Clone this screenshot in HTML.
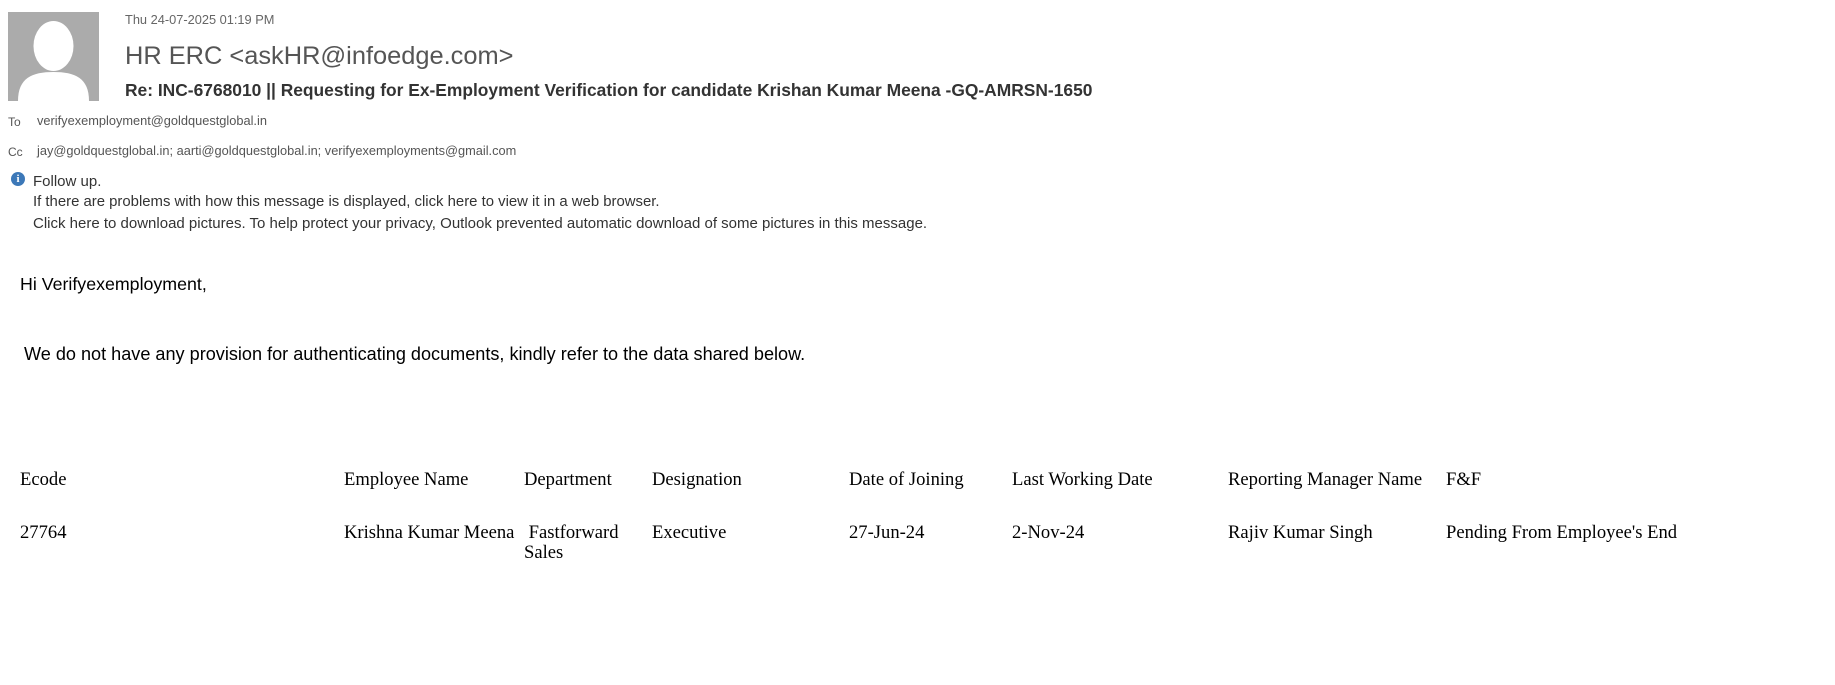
<!DOCTYPE html>
<html><head><meta charset="utf-8"><style>
body{margin:0;width:1835px;height:685px;background:#fff;position:relative;overflow:hidden;font-family:"Liberation Sans",sans-serif;color:#222}
.a{position:absolute;white-space:nowrap;line-height:1}
.t{font-family:"Liberation Serif",serif;font-size:18.6px;color:#000}
</style></head><body>
<div class="a" style="left:8px;top:12px;width:91px;height:89px;background:#ababab;overflow:hidden">
<svg width="91" height="89" viewBox="0 0 91 89"><ellipse cx="45.5" cy="34" rx="20" ry="25" fill="#fff"/><path d="M10 89 C10 66 24 60 45.5 60 C67 60 81 66 81 89 Z" fill="#fff"/></svg></div>
<div class="a" style="left:125px;top:14px;font-size:12.8px;color:#666">Thu 24-07-2025 01:19 PM</div>
<div class="a" style="left:125px;top:44px;font-size:25.4px;color:#555">HR ERC &lt;askHR@infoedge.com&gt;</div>
<div class="a" style="left:125px;top:82px;font-size:17.4px;font-weight:bold;color:#333">Re: INC-6768010 || Requesting for Ex-Employment Verification for candidate Krishan Kumar Meena -GQ-AMRSN-1650</div>
<div class="a" style="left:8px;top:116px;font-size:12px;color:#555">To</div>
<div class="a" style="left:37px;top:115px;font-size:12.8px;color:#555">verifyexemployment@goldquestglobal.in</div>
<div class="a" style="left:8px;top:146px;font-size:12px;color:#555">Cc</div>
<div class="a" style="left:37px;top:145px;font-size:12.8px;color:#555">jay@goldquestglobal.in; aarti@goldquestglobal.in; verifyexemployments@gmail.com</div>
<div class="a" style="left:11px;top:172px;width:14px;height:14px;border-radius:50%;background:#3c78b8;color:#fff;font-size:11px;font-weight:bold;text-align:center;line-height:14px;font-family:'Liberation Serif',serif">i</div>
<div class="a" style="left:33px;top:174px;font-size:15px;color:#333">Follow up.</div>
<div class="a" style="left:33px;top:195px;font-size:14.9px;color:#333">If there are problems with how this message is displayed, click here to view it in a web browser.</div>
<div class="a" style="left:33px;top:216px;font-size:15px;color:#333">Click here to download pictures. To help protect your privacy, Outlook prevented automatic download of some pictures in this message.</div>
<div class="a" style="left:20px;top:276px;font-size:17.8px;color:#000">Hi Verifyexemployment,</div>
<div class="a" style="left:24px;top:345px;font-size:18.1px;color:#000">We do not have any provision for authenticating documents, kindly refer to the data shared below.</div>
<div class="a t" style="left:20px;top:471px">Ecode</div>
<div class="a t" style="left:344px;top:471px">Employee Name</div>
<div class="a t" style="left:524px;top:471px">Department</div>
<div class="a t" style="left:652px;top:471px">Designation</div>
<div class="a t" style="left:849px;top:471px">Date of Joining</div>
<div class="a t" style="left:1012px;top:471px">Last Working Date</div>
<div class="a t" style="left:1228px;top:471px">Reporting Manager Name</div>
<div class="a t" style="left:1446px;top:471px">F&amp;F</div>
<div class="a t" style="left:20px;top:524px">27764</div>
<div class="a t" style="left:344px;top:524px">Krishna Kumar Meena</div>
<div class="a t" style="left:524px;top:524px">&nbsp;Fastforward</div>
<div class="a t" style="left:524px;top:544px">Sales</div>
<div class="a t" style="left:652px;top:524px">Executive</div>
<div class="a t" style="left:849px;top:524px">27-Jun-24</div>
<div class="a t" style="left:1012px;top:524px">2-Nov-24</div>
<div class="a t" style="left:1228px;top:524px">Rajiv Kumar Singh</div>
<div class="a t" style="left:1446px;top:524px">Pending From Employee's End</div>
</body></html>
